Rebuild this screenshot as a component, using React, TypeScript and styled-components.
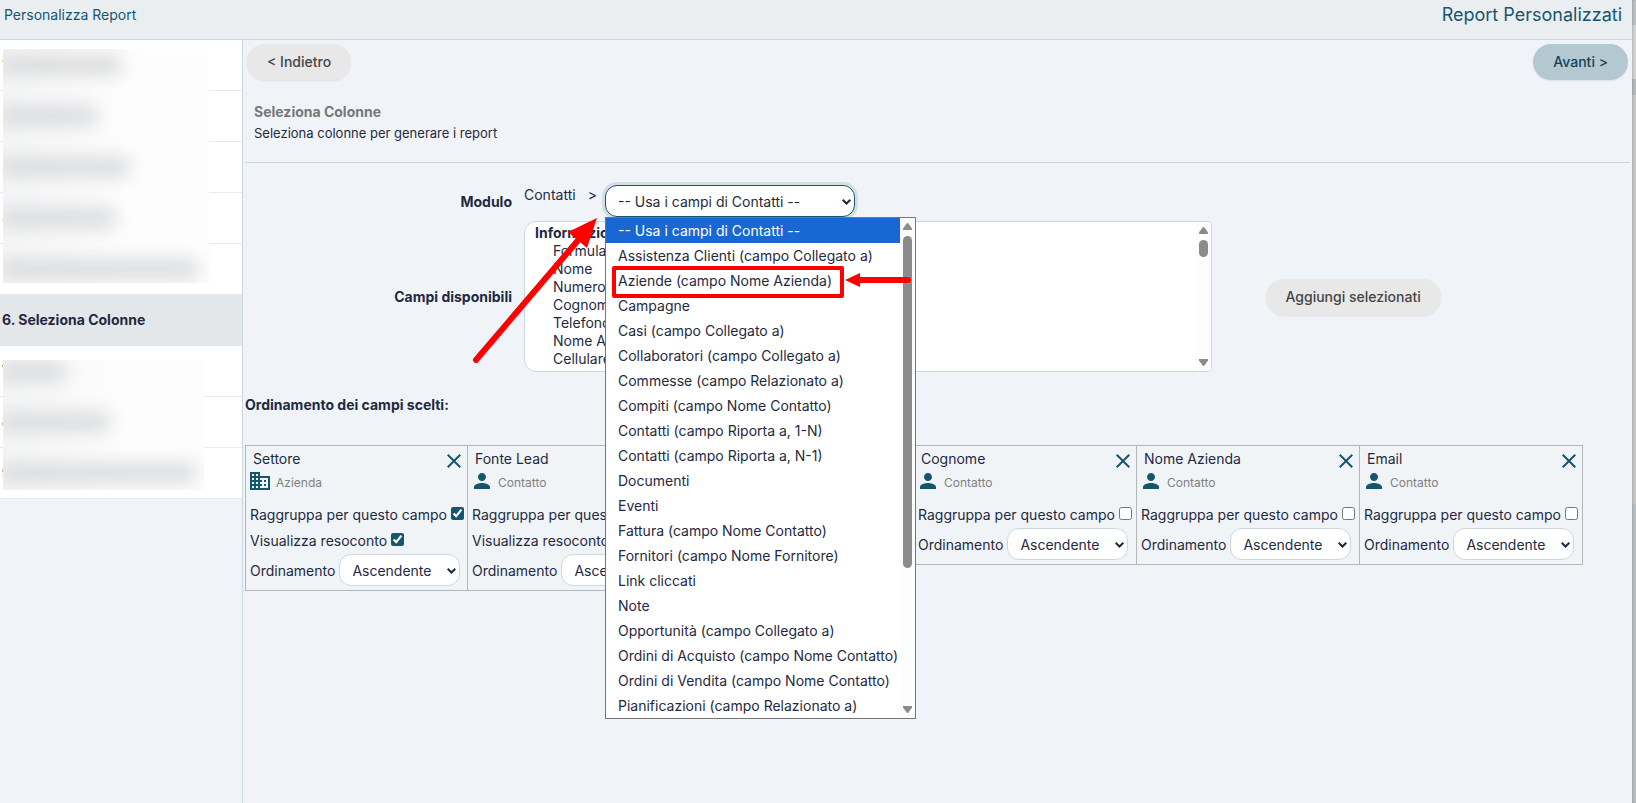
import React from 'react';
import styled, { createGlobalStyle, css } from 'styled-components';
import { MdClose, MdDomain, MdPerson } from 'react-icons/md';

const ink = '#1f2a40';
const teal = '#15566f';
const line = '#ccd8df';

const GlobalStyle = createGlobalStyle`
  *, *::before, *::after { box-sizing: border-box; }
  body {
    margin: 0;
    background: #f0f4f9;
    color: ${ink};
    font: 14px/20px Inter, "Liberation Sans", sans-serif;
  }
  button, select, input { font: inherit; color: inherit; }
`;

const Shell = styled.div`
  display: grid;
  grid-template-columns: minmax(0, 1fr) 4px;
  min-height: 100vh;
`;

const Page = styled.div`
  display: flex;
  flex-direction: column;
`;

const PageEdge = styled.div`
  background: linear-gradient(
    #bcc0c3 0 25px, #d3d3d3 25px 79px, #b5b9bc 79px 95px,
    #c8c8c8 95px 504px, #b9bec2 504px 100%
  );
  box-shadow: inset 1px 0 2px rgba(0, 0, 0, 0.15);
`;

const Header = styled.header`
  display: flex;
  justify-content: space-between;
  height: 40px;
  padding: 5px 10px 0 4px;
  background: #ebeef1;
  border-bottom: 1px solid ${line};
  color: ${teal};
`;

const Crumb = styled.a`
  color: inherit;
  text-decoration: none;
`;

const PageTitle = styled.h1`
  margin: 0;
  font-size: 18px;
  font-weight: 400;
  line-height: 20px;
`;

const Body = styled.div`
  display: grid;
  grid-template-columns: 243px minmax(0, 1fr);
  flex: 1;
`;

const Sidebar = styled.nav`
  border-right: 1px solid ${line};
`;

const Steps = styled.ol`
  position: relative;
  margin: 0;
  padding: 0;
  list-style: none;
`;

const Step = styled.li<{ $active?: boolean; $done?: boolean }>`
  display: flex;
  align-items: center;
  height: 51px;
  padding-left: 2px;
  background: ${(p) => (p.$active ? '#e4e7ea' : '#fff')};
  border-bottom: 1px solid ${(p) => (p.$active ? '#e4e7ea' : '#e6ebf0')};
  font-weight: ${(p) => (p.$done ? 400 : 700)};
`;

const Redaction = styled.div<{ $top: number; $width: number; $height: number }>`
  position: absolute;
  left: 3px;
  top: ${(p) => p.$top}px;
  width: ${(p) => p.$width}px;
  height: ${(p) => p.$height}px;
  overflow: hidden;
  background: linear-gradient(90deg, #f5f6f6, #fdfdfd 60%);
`;

const Smudge = styled.span<{ $top: number; $width: number }>`
  position: absolute;
  left: -6px;
  top: ${(p) => p.$top}px;
  width: ${(p) => p.$width}px;
  height: 20px;
  border-radius: 10px;
  background: #d9dbdd;
  filter: blur(9px);
`;

const Main = styled.main`
  padding: 4px 2px;
`;

const Actions = styled.div`
  display: flex;
  justify-content: space-between;
  padding: 0 2px;
`;

const PillButton = styled.button<{ $primary?: boolean }>`
  height: 36px;
  padding: 0 20px;
  border: 0;
  border-radius: 18px;
  background: ${(p) => (p.$primary ? '#b4c8d1' : '#e8e8e8')};
  color: ${(p) => (p.$primary ? '#124358' : '#444')};
  font-weight: 500;
  box-shadow: 0 1px 2px rgba(0, 0, 0, 0.08);
`;

const Intro = styled.section`
  padding: 22px 9px 19px;
  border-bottom: 1px solid ${line};
`;

const IntroTitle = styled.h2`
  margin: 0 0 1px;
  color: #777;
  font-size: 14px;
  font-weight: 700;
  line-height: 20px;
`;

const IntroText = styled.p`
  margin: 0;
  font-size: 13px;
  line-height: 20px;
`;

const Form = styled.div`
  display: grid;
  grid-template-columns: 20% 50% 30%;
  row-gap: 4px;
  align-items: center;
  padding-top: 22px;
`;

const FieldLabel = styled.label`
  padding: 1px 10px 0 0;
  text-align: right;
  font-weight: 700;
`;

const ModuleField = styled.div`
  display: flex;
  padding-left: 2px;
`;

const ModulePath = styled.span`
  display: flex;
  gap: 12px;
  width: 81px;
`;

const SelectAnchor = styled.div`
  position: relative;
`;

const pillSelect = css`
  appearance: none;
  background: #fff;
  border: 1px solid ${line};
  border-radius: 12px;
  height: 32px;
  padding: 2px 24px 0 12px;
`;

const SelectBox = styled.span`
  position: relative;
  display: inline-flex;
`;

const SmallSelect = styled.select`
  ${pillSelect}
  width: 121px;
`;

const ModuleSelect = styled.select`
  ${pillSelect}
  width: 250px;
  border-color: ${teal};
  box-shadow: 0 0 0 3px #d2dfe5;
  outline: 0;
`;

const ChevronIcon = styled.svg`
  position: absolute;
  right: 4px;
  top: 13px;
  width: 9px;
  height: 8px;
  fill: none;
  stroke: ${ink};
  stroke-width: 2;
  pointer-events: none;
`;

const Menu = styled.div`
  position: absolute;
  z-index: 2;
  left: 0;
  top: 32px;
  display: flex;
  width: 311px;
  border: 1px solid #767676;
  background: #fff;
`;

const Options = styled.ul`
  flex: 1;
  margin: 0;
  padding: 0;
  list-style: none;
`;

const MenuOption = styled.li<{ $selected?: boolean }>`
  position: relative;
  height: 25px;
  padding-left: 12px;
  line-height: 26px;
  white-space: nowrap;
  ${(p) => p.$selected && css`background: #1967d2; color: #fff;`}
`;

const Highlight = styled.span`
  position: absolute;
  left: 6px;
  top: -2px;
  width: 232px;
  height: 32px;
  border: 4px solid #f00;
  border-radius: 2px;
`;

const Track = styled.div`
  display: flex;
  flex-direction: column;
  align-items: center;
  width: 15px;
  padding: 5px 0;
  background: #fcfcfc;
`;

const Thumb = styled.div<{ $size: number }>`
  width: 9px;
  height: ${(p) => p.$size}px;
  margin: 6px 0 auto;
  border-radius: 5px;
  background: #8b8b8b;
`;

const TrackArrow = styled.svg`
  width: 9px;
  height: 7px;
  fill: #8b8b8b;
`;

const Pointer = styled.svg`
  position: absolute;
  z-index: 3;
  left: -135px;
  top: 27px;
  width: 450px;
  height: 155px;
  pointer-events: none;
`;

const FieldsBox = styled.div`
  display: flex;
  width: 688px;
  max-width: 100%;
  height: 151px;
  margin-left: 2px;
  overflow: hidden;
  background: #fff;
  border: 1px solid ${line};
  border-radius: 12px 4px 4px 12px;
`;

const FieldsList = styled.select`
  flex: 1;
  height: 149px;
  padding: 2px 0 0 8px;
  border: 0;
  outline: 0;
  background: transparent;
  scrollbar-width: none;
  optgroup { font-weight: 700; line-height: 18px; }
  option { min-height: 18px; height: 18px; padding: 0 2px 0 20px; font-weight: 400; line-height: 18px; }
  option::before { content: none; }
`;

const AddCell = styled.div`
  padding-left: 51px;
`;

const OrderTitle = styled.h3`
  margin: 23px 0 30px;
  font-size: 14px;
  font-weight: 700;
  line-height: 20px;
`;

const Cards = styled.div`
  display: grid;
  grid-template-columns: repeat(6, minmax(0, 1fr));
  align-items: start;
  max-width: 1338px;
`;

const Card = styled.article`
  padding: 3px 0 4px 2px;
  background: #f1f4f7;
  border: 1px solid #b4b6b8;
  border-left-width: 0;
  &:first-child { border-left-width: 1px; }
`;

const CardHead = styled.div`
  display: flex;
  justify-content: space-between;
  align-items: flex-start;
  height: 20px;
  padding: 0 1px 0 5px;
`;

const CloseButton = styled.button`
  display: flex;
  padding: 0;
  border: 0;
  background: none;
  color: ${teal};
`;

const Origin = styled.div`
  display: flex;
  align-items: center;
  gap: 4px;
  height: 24px;
  margin-bottom: 9px;
  color: #808080;
  font-size: 12px;
  svg { color: ${teal}; }
`;

const OriginName = styled.span`
  padding-top: 3px;
`;

const CheckLine = styled.label`
  display: flex;
  align-items: center;
  gap: 4px;
  height: 26px;
  padding-left: 2px;
  white-space: nowrap;
`;

const Check = styled.input`
  width: 13px;
  height: 13px;
  margin: 0 0 4px;
  accent-color: ${teal};
`;

const OrderLine = styled.label`
  display: flex;
  align-items: center;
  gap: 4px;
  padding-left: 2px;
`;

const OrderText = styled.span`
  padding-top: 2px;
`;

const moduleOptions = [
  '-- Usa i campi di Contatti --',
  'Assistenza Clienti (campo Collegato a)',
  'Aziende (campo Nome Azienda)',
  'Campagne',
  'Casi (campo Collegato a)',
  'Collaboratori (campo Collegato a)',
  'Commesse (campo Relazionato a)',
  'Compiti (campo Nome Contatto)',
  'Contatti (campo Riporta a, 1-N)',
  'Contatti (campo Riporta a, N-1)',
  'Documenti',
  'Eventi',
  'Fattura (campo Nome Contatto)',
  'Fornitori (campo Nome Fornitore)',
  'Link cliccati',
  'Note',
  'Opportunità (campo Collegato a)',
  'Ordini di Acquisto (campo Nome Contatto)',
  'Ordini di Vendita (campo Nome Contatto)',
  'Pianificazioni (campo Relazionato a)',
];

const fields = ['Formula', 'Nome', 'Numero', 'Cognome', 'Telefono', 'Nome Azienda', 'Cellulare'];

const columns = [
  { title: 'Settore', origin: 'Azienda', grouped: true },
  { title: 'Fonte Lead', origin: 'Contatto', grouped: true },
  { title: 'Nome', origin: 'Contatto', grouped: false },
  { title: 'Cognome', origin: 'Contatto', grouped: false },
  { title: 'Nome Azienda', origin: 'Contatto', grouped: false },
  { title: 'Email', origin: 'Contatto', grouped: false },
];

const steps = ['1.', '2.', '3.', '4.', '5.', '6. Seleziona Colonne', '7.', '8.', '9.'];

function Chevron() {
  return (
    <ChevronIcon viewBox="0 0 9 8" aria-hidden="true">
      <path d="M0.7 1.7 4.5 5.5 8.3 1.7" />
    </ChevronIcon>
  );
}

function Scrollbar({ thumb }: { thumb: number }) {
  return (
    <Track aria-hidden="true">
      <TrackArrow viewBox="0 0 9 7"><path d="M3.6.6Q4.5-.5 5.4.6L9 5.4V7H0V5.4Z" /></TrackArrow>
      <Thumb $size={thumb} />
      <TrackArrow viewBox="0 0 9 7"><path d="M3.6 6.4Q4.5 7.5 5.4 6.4L9 1.6V0H0V1.6Z" /></TrackArrow>
    </Track>
  );
}

function ColumnCard({ title, origin, grouped }: (typeof columns)[number]) {
  return (
    <Card>
      <CardHead>
        <span>{title}</span>
        <CloseButton type="button" aria-label={`Rimuovi ${title}`}><MdClose size={24} /></CloseButton>
      </CardHead>
      <Origin>
        {origin === 'Azienda' ? <MdDomain size={24} /> : <MdPerson size={24} />}
        <OriginName>{origin}</OriginName>
      </Origin>
      <CheckLine>
        Raggruppa per questo campo
        <Check type="checkbox" defaultChecked={grouped} />
      </CheckLine>
      {grouped && (
        <CheckLine>
          Visualizza resoconto
          <Check type="checkbox" defaultChecked />
        </CheckLine>
      )}
      <OrderLine>
        <OrderText>Ordinamento</OrderText>
        <SelectBox>
          <SmallSelect><option>Ascendente</option></SmallSelect>
          <Chevron />
        </SelectBox>
      </OrderLine>
    </Card>
  );
}

export default function App() {
  return (
    <Shell>
      <GlobalStyle />
      <Page>
        <Header>
          <Crumb href="#">Personalizza Report</Crumb>
          <PageTitle>Report Personalizzati</PageTitle>
        </Header>
        <Body>
          <Sidebar>
            <Steps>
              {steps.map((s, i) => <Step key={s} $active={i === 5} $done={i < 5}>{s}</Step>)}
              <Redaction as="li" $top={9} $width={206} $height={234}>
                <Smudge $top={6} $width={126} />
                <Smudge $top={57} $width={102} />
                <Smudge $top={108} $width={134} />
                <Smudge $top={159} $width={120} />
                <Smudge $top={210} $width={202} />
              </Redaction>
              <Redaction as="li" $top={320} $width={201} $height={130}>
                <Smudge $top={2} $width={70} />
                <Smudge $top={52} $width={114} />
                <Smudge $top={103} $width={200} />
              </Redaction>
            </Steps>
          </Sidebar>
          <Main>
            <Actions>
              <PillButton type="button">&lt; Indietro</PillButton>
              <PillButton type="button" $primary>Avanti &gt;</PillButton>
            </Actions>
            <Intro>
              <IntroTitle>Seleziona Colonne</IntroTitle>
              <IntroText>Seleziona colonne per generare i report</IntroText>
            </Intro>
            <Form>
              <FieldLabel htmlFor="modulo">Modulo</FieldLabel>
              <ModuleField>
                <ModulePath><span>Contatti</span><span>&gt;</span></ModulePath>
                <SelectAnchor>
                  <SelectBox>
                    <ModuleSelect id="modulo"><option>{moduleOptions[0]}</option></ModuleSelect>
                    <Chevron />
                  </SelectBox>
                  <Menu>
                    <Options role="listbox" aria-label="Modulo">
                      {moduleOptions.map((o, i) => (
                        <MenuOption key={o} role="option" aria-selected={i === 0} $selected={i === 0}>
                          {o}
                          {i === 2 && <Highlight />}
                        </MenuOption>
                      ))}
                    </Options>
                    <Scrollbar thumb={332} />
                  </Menu>
                  <Pointer viewBox="470 212 450 155" fill="#f00" stroke="#f00" aria-hidden="true">
                    <path d="M476 360 580 238" strokeWidth="6" strokeLinecap="round" />
                    <path d="M597 218 568 232 587 248Z" stroke="none" />
                    <path d="M857 280H908" strokeWidth="6" strokeLinecap="round" />
                    <path d="M845 280 860 273V287Z" stroke="none" />
                  </Pointer>
                </SelectAnchor>
              </ModuleField>
              <span />
              <FieldLabel htmlFor="campi">Campi disponibili</FieldLabel>
              <FieldsBox>
                <FieldsList id="campi" multiple>
                  <optgroup label="Informazioni">
                    {fields.map((f) => <option key={f}>{f}</option>)}
                  </optgroup>
                </FieldsList>
                <Scrollbar thumb={17} />
              </FieldsBox>
              <AddCell><PillButton type="button">Aggiungi selezionati</PillButton></AddCell>
            </Form>
            <OrderTitle>Ordinamento dei campi scelti:</OrderTitle>
            <Cards>
              {columns.map((c) => <ColumnCard key={c.title} {...c} />)}
            </Cards>
          </Main>
        </Body>
      </Page>
      <PageEdge />
    </Shell>
  );
}
